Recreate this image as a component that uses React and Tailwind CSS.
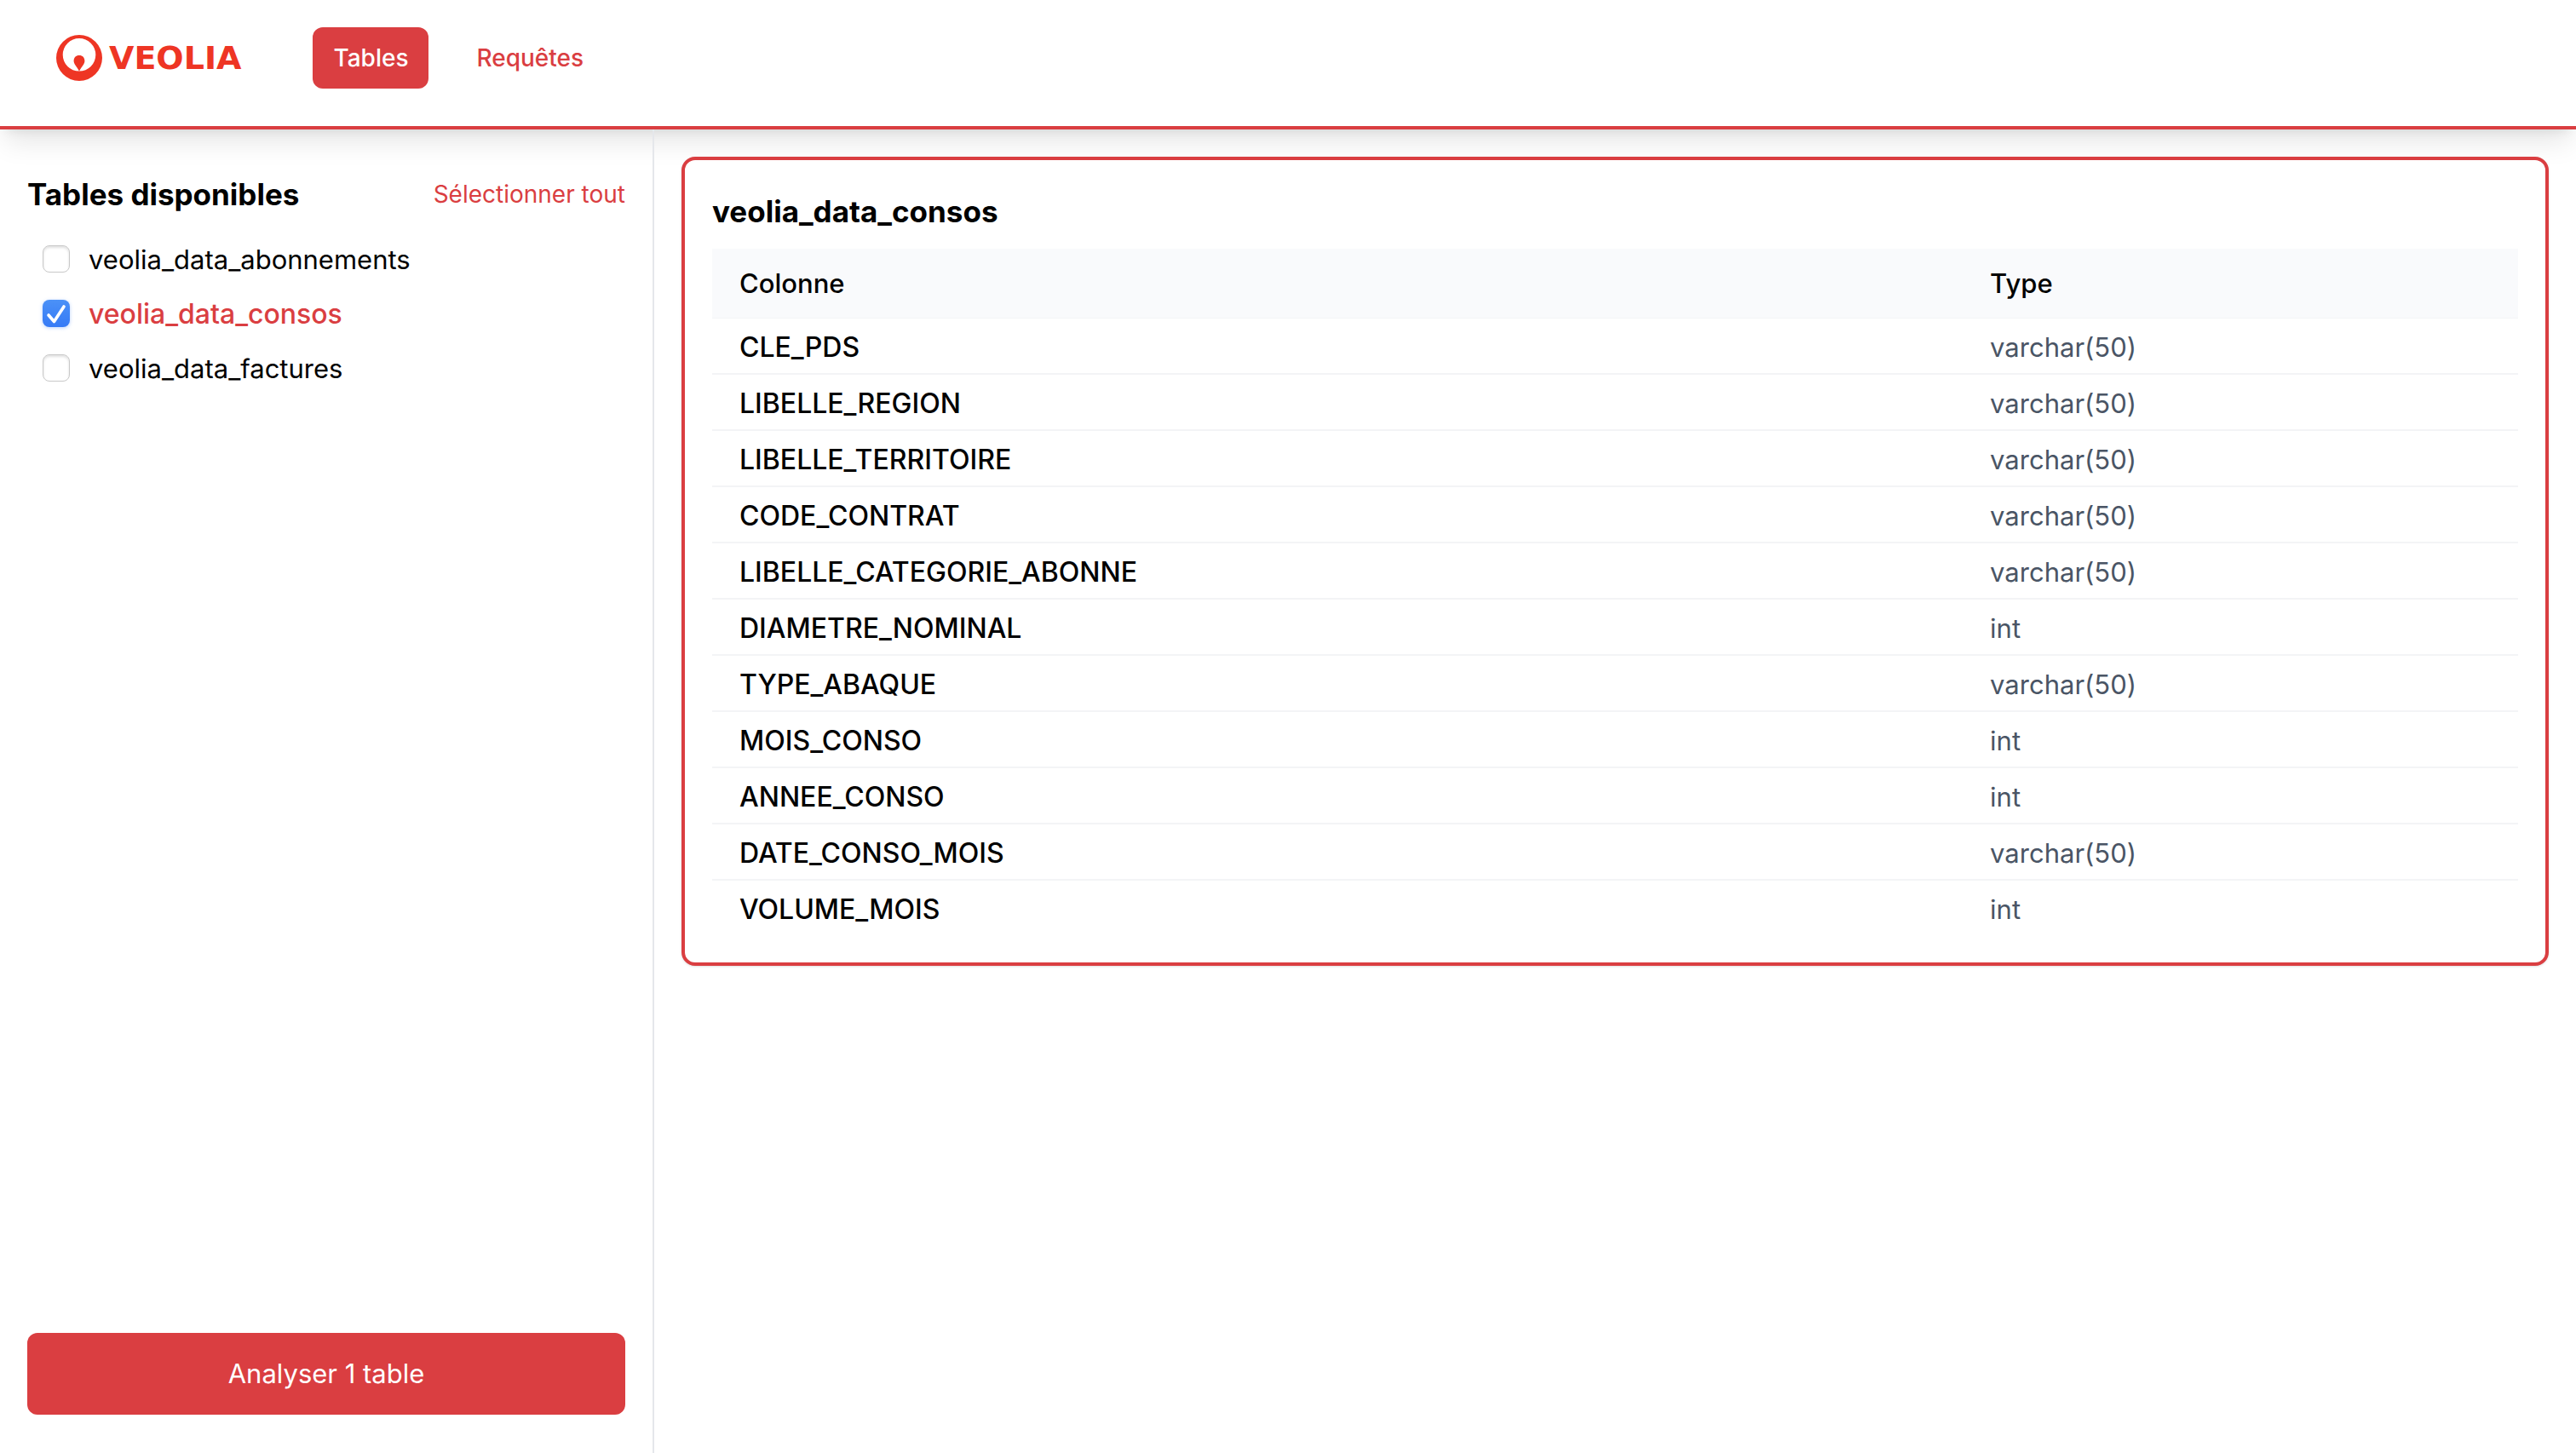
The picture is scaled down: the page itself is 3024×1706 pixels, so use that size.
import { useState } from "react";

const TABLES = ["veolia_data_abonnements", "veolia_data_consos", "veolia_data_factures"];

const COLUMNS = [
  ["CLE_PDS", "varchar(50)"],
  ["LIBELLE_REGION", "varchar(50)"],
  ["LIBELLE_TERRITOIRE", "varchar(50)"],
  ["CODE_CONTRAT", "varchar(50)"],
  ["LIBELLE_CATEGORIE_ABONNE", "varchar(50)"],
  ["DIAMETRE_NOMINAL", "int"],
  ["TYPE_ABAQUE", "varchar(50)"],
  ["MOIS_CONSO", "int"],
  ["ANNEE_CONSO", "int"],
  ["DATE_CONSO_MOIS", "varchar(50)"],
  ["VOLUME_MOIS", "int"],
];

function Logo() {
  return (
    <a href="#" aria-label="Veolia" className="flex items-center gap-2 text-[#ee3524]">
      <svg viewBox="0 0 54 54" className="size-[54px]" fill="currentColor" aria-hidden="true">
        <path
          fillRule="evenodd"
          d="M27 0a27 27 0 1 1 0 54a27 27 0 1 1 0-54ZM27 4a19.300 19.300 0 1 0 0 38.600a19.300 19.300 0 1 0 0-38.600Z"
        />
        <path d="M27 24c3.900 0 6.400 2.700 6.400 6.600c0 4.200-3.800 6.400-6.400 12.200c-2.600-5.800-6.400-8-6.400-12.200c0-3.900 2.500-6.600 6.400-6.600Z" />
      </svg>
      <span className="font-['DejaVu_Sans',sans-serif] text-[38px] font-bold">VEOLIA</span>
    </a>
  );
}

function TableOption({ name, checked, onToggle }) {
  return (
    <label className="flex h-16 items-center gap-[22px] pl-[18px]">
      <span className="grid size-8 place-items-center">
        <input
          type="checkbox"
          checked={checked}
          onChange={onToggle}
          className="col-start-1 row-start-1 size-8 appearance-none rounded-lg border border-[#c8c8c8] bg-white shadow-[inset_0_2px_3px_rgb(0_0_0/0.12)] checked:border-0 checked:bg-linear-to-b checked:from-[#4b91f7] checked:to-[#367af6] checked:shadow-[0_1px_4px_rgb(54_122_246/0.35)]"
        />
        {checked && (
          <svg viewBox="0 0 32 32" className="pointer-events-none col-start-1 row-start-1 size-8" fill="none" stroke="white" strokeWidth="3.600" strokeLinecap="round" strokeLinejoin="round" aria-hidden="true">
            <path d="M7 18L13.500 25.500L25 8" />
          </svg>
        )}
      </span>
      <span className={checked ? "pt-0.5 font-medium text-[#da3e41]" : "pt-0.5 text-[31px]"}>{name}</span>
    </label>
  );
}

export default function App() {
  const [selected, setSelected] = useState(["veolia_data_consos"]);
  const toggle = (name) =>
    setSelected((list) => (list.includes(name) ? list.filter((n) => n !== name) : [...list, name]));

  return (
    <div className="flex min-h-screen flex-col bg-white font-['Inter',sans-serif] text-[32px] leading-12 text-black">
      <header className="flex items-center gap-[84px] border-b-4 border-[#da3e41] px-[66px] pt-8 pb-11 shadow-[0_20px_30px_-6px_rgb(0_0_0/0.1),0_8px_12px_-8px_rgb(0_0_0/0.1)]">
        <Logo />
        <nav className="flex gap-8 text-[28px] leading-10 font-medium">
          <button type="button" className="rounded-xl bg-[#da3e41] px-6 py-4 text-white">Tables</button>
          <button type="button" className="rounded-xl px-6 py-4 text-[#da3e41]">Requêtes</button>
        </nav>
      </header>
      <div className="flex flex-1">
        <aside className="flex w-192 shrink-0 flex-col border-r-2 border-gray-200 px-8 pt-12 pb-[45px]">
          <div className="mb-4 flex items-center justify-between">
            <h2 className="text-[35px] leading-14 font-bold">Tables disponibles</h2>
            <button type="button" onClick={() => setSelected(TABLES)} className="text-[28px] leading-10 text-[#da3e41]">
              Sélectionner tout
            </button>
          </div>
          <div className="flex-1">
            {TABLES.map((name) => (
              <TableOption key={name} name={name} checked={selected.includes(name)} onToggle={() => toggle(name)} />
            ))}
          </div>
          <button type="button" className="rounded-xl bg-[#da3e41] py-6 text-[31px] text-white">Analyser 1 table</button>
        </aside>
        <main className="min-w-0 flex-1 p-8">
          <section className="rounded-2xl border-4 border-[#da3e41] bg-white p-8 shadow-sm">
            <h3 className="mb-4 text-[35px] leading-14 font-bold">veolia_data_consos</h3>
            <table className="w-full table-fixed border-separate border-spacing-0 text-left">
              <thead className="bg-[#f9fafc] text-[31px]">
                <tr>
                  <th scope="col" className="h-[82px] w-[69.25%] border-b border-gray-100 px-8 font-medium">Colonne</th>
                  <th scope="col" className="h-[82px] border-b border-gray-100 px-8 font-medium">Type</th>
                </tr>
              </thead>
              <tbody>
                {COLUMNS.map(([name, type]) => (
                  <tr key={name} className="group">
                    <td className="border-b-2 border-gray-100 px-8 pt-2.5 pb-1.5 font-medium group-last:border-b-0">{name}</td>
                    <td className="border-b-2 border-gray-100 px-8 pt-2.5 pb-1.5 text-[31px] text-gray-600 group-last:border-b-0">{type}</td>
                  </tr>
                ))}
              </tbody>
            </table>
          </section>
        </main>
      </div>
    </div>
  );
}
